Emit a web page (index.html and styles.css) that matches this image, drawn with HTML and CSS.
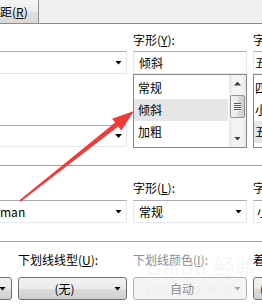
FILE: index.html
```html
<!DOCTYPE html>
<html lang="zh-CN">
<head>
    <meta charset="UTF-8">
    <meta name="viewport" content="width=device-width, initial-scale=1.0">
    <title>字体</title>
    <link rel="stylesheet" href="styles.css">
</head>
<body>
    <div class="dialog">
        <div class="tabs">
            <div class="tab">字符间距(<u>R</u>)</div>
        </div>

        <div class="pane">
            <!-- 中文 / 西文字体 -->
            <section class="group group-top">
                <div class="col">
                    <label class="label">中文字体(<u>T</u>):</label>
                    <div class="combo"><span class="combo-text">+中文正文</span><i class="caret"></i></div>
                    <label class="label label-second">西文字体(<u>F</u>):</label>
                    <div class="combo combo-short"><span class="combo-text">+西文正文</span><i class="caret"></i></div>
                </div>
                <div class="col">
                    <label class="label">字形(<u>Y</u>):</label>
                    <div class="edit">倾斜</div>
                    <div class="listbox">
                        <ul class="list-items">
                            <li>常规</li>
                            <li class="selected">倾斜</li>
                            <li>加粗</li>
                        </ul>
                        <div class="scrollbar">
                            <span class="sb-btn sb-up"></span>
                            <span class="sb-thumb"><i class="grip"></i></span>
                            <span class="sb-btn sb-down"></span>
                        </div>
                    </div>
                </div>
                <div class="col">
                    <label class="label">字号(<u>S</u>):</label>
                    <div class="edit edit-narrow">五号</div>
                    <div class="listbox">
                        <ul class="list-items list-narrow">
                            <li>四号</li>
                            <li>小四</li>
                            <li class="selected">五号</li>
                        </ul>
                    </div>
                </div>
            </section>

            <!-- 复杂文种 -->
            <section class="group group-mid">
                <div class="col">
                    <label class="label">字体(<u>E</u>):</label>
                    <div class="combo"><span class="combo-text">Times New Roman</span><i class="caret"></i></div>
                </div>
                <div class="col">
                    <label class="label">字形(<u>L</u>):</label>
                    <div class="combo"><span class="combo-text combo-text-pad">常规</span><i class="caret"></i></div>
                </div>
                <div class="col">
                    <label class="label">字号(<u>Z</u>):</label>
                    <div class="combo"><span class="combo-text">小四</span><i class="caret"></i></div>
                </div>
            </section>

            <!-- 所有文字 -->
            <section class="group group-bottom">
                <div class="col">
                    <label class="label">字体颜色(<u>C</u>):</label>
                    <div class="button"><span class="button-text">自动</span><i class="caret"></i></div>
                </div>
                <div class="col">
                    <label class="label">下划线线型(<u>U</u>):</label>
                    <div class="button"><span class="button-text">(无)</span><i class="caret"></i></div>
                </div>
                <div class="col">
                    <label class="label is-disabled">下划线颜色(<u>I</u>):</label>
                    <div class="button is-disabled"><span class="button-text">自动</span><i class="caret"></i></div>
                </div>
                <div class="col">
                    <label class="label">着重号(·):</label>
                    <div class="button"><span class="button-text">(无)</span><i class="caret"></i></div>
                </div>
            </section>
        </div>

        <div class="watermark">
            <span class="wm-logo">Bai<b>du</b> 经验</span>
            <span class="wm-url">jingyan.baidu.com</span>
        </div>

        <svg class="arrow" width="262" height="308" viewBox="0 0 262 308">
            <polygon points="19.4,200.2 115.2,122.6 112,118.7 134,111 121.4,130.5 118.2,126.6 20.6,201.8" fill="#f03b3b"/>
        </svg>
    </div>
</body>
</html>
```

FILE: styles.css
```css
:root {
    --line: #a0a0a0;
    --edit-top: #abadb3;
    --edit-side: #e3e9ef;
    --list-border: #828790;
    --selected: #e6e6e6;
    --disabled: #8f8f8f;
}

body {
    margin: 0;
    font-family: "Noto Sans CJK SC", "Microsoft YaHei", sans-serif;
    font-size: 12px;
    color: #000;
    background: #fff;
}

u {
    text-decoration: underline;
    text-underline-offset: 1px;
}

.dialog {
    position: relative;
    width: 262px;
    height: 308px;
    overflow: hidden;
}

.tabs {
    display: flex;
    height: 23px;
    background: #f0f0f0;
    border-bottom: 1px solid #898c95;
}

.tab {
    margin-left: -42px;
    padding: 0 10px 0 6px;
    line-height: 23px;
    white-space: nowrap;
    border-right: 1px solid #8e8f8f;
    background: linear-gradient(#f4f4f4, #ececec 50%, #e0e0e0 51%, #d8d8d8);
}

.group {
    display: grid;
    grid-template-columns: 210px 114px 80px;
    column-gap: 6px;
    margin-left: -83px;
    box-sizing: border-box;
    align-items: start;
}

.group-top {
    height: 141px;
    padding-top: 8px;
}

.group-mid {
    height: 76px;
    padding-top: 14px;
    border-top: 1px solid var(--line);
}

.group-bottom {
    grid-template-columns: 105px 109px 114px 50px;
    margin-left: -93px;
    padding-top: 10px;
    border-top: 1px solid var(--line);
}

.col {
    display: flex;
    flex-direction: column;
    min-width: 0;
}

.label {
    display: block;
    height: 16px;
    line-height: 16px;
    margin-bottom: 3px;
    white-space: nowrap;
}

.label-second {
    margin-top: 31px;
    margin-bottom: 4px;
}

.group-mid .label {
    margin-bottom: 4px;
}

.group-bottom .label {
    margin-bottom: 9px;
}

.label.is-disabled {
    color: var(--disabled);
}

.combo,
.edit {
    display: flex;
    align-items: center;
    height: 23px;
    box-sizing: border-box;
    border: 1px solid var(--edit-side);
    border-top-color: var(--edit-top);
    background: #fff;
    white-space: nowrap;
}

.combo {
    padding: 0 4px 0 3px;
}

.combo-short {
    height: 22px;
}

.combo-text {
    flex: 1;
    overflow: hidden;
}

.combo-text-pad {
    padding-left: 2px;
}

.edit {
    padding-left: 5px;
}

.edit-narrow {
    padding-left: 1px;
}

.caret {
    flex: none;
    width: 7px;
    height: 4px;
    background: #000;
    clip-path: polygon(0 0, 100% 0, 50% 100%);
}

.listbox {
    display: flex;
    height: 74px;
    box-sizing: border-box;
    border: 1px solid var(--list-border);
    background: #fff;
}

.list-items {
    flex: 1;
    margin: 0;
    padding: 2px 1px 0 0;
    list-style: none;
    overflow: hidden;
}

.list-items li {
    height: 22px;
    line-height: 22px;
    padding-left: 4px;
    white-space: nowrap;
}

.list-narrow li {
    padding-left: 1px;
}

.list-items li.selected {
    background: var(--selected);
}

.scrollbar {
    display: flex;
    flex-direction: column;
    align-items: center;
    width: 17px;
    background: linear-gradient(90deg, #e6e6e6, #f4f4f4 25%, #f4f4f4 75%, #e6e6e6);
}

.sb-btn {
    display: flex;
    align-items: center;
    justify-content: center;
    width: 17px;
    height: 17px;
}

.sb-btn::before {
    content: "";
    width: 7px;
    height: 4px;
    background: #404040;
}

.sb-up::before {
    clip-path: polygon(50% 0, 100% 100%, 0 100%);
}

.sb-down {
    margin-top: auto;
}

.sb-down::before {
    clip-path: polygon(0 0, 100% 0, 50% 100%);
}

.sb-thumb {
    display: flex;
    align-items: center;
    justify-content: center;
    width: 15px;
    height: 23px;
    margin-top: 3px;
    box-sizing: border-box;
    border: 1px solid #959595;
    border-radius: 2px;
    background: linear-gradient(90deg, #f3f3f3, #e8e8e8 50%, #d9d9d9 51%, #cfcfcf);
}

.grip {
    width: 7px;
    height: 8px;
    background: repeating-linear-gradient(#5a5a5a 0 1px, #f8f8f8 1px 2px);
}

.button {
    display: flex;
    align-items: center;
    height: 23px;
    box-sizing: border-box;
    padding: 0 5px 0 4px;
    border: 1px solid #707070;
    border-radius: 3px;
    background: linear-gradient(#f2f2f2, #ebebeb 50%, #dddddd 51%, #cfcfcf);
    white-space: nowrap;
}

.button-text {
    flex: 1;
    padding-right: 8px;
    text-align: center;
    overflow: hidden;
}

.button.is-disabled {
    border-color: #adb2b5;
    background: #f4f4f4;
    color: var(--disabled);
}

.button.is-disabled .caret {
    background: #a6a6a6;
}

.watermark {
    position: absolute;
    left: 146px;
    top: 254px;
    display: flex;
    flex-direction: column;
    color: rgba(0, 0, 0, 0.045);
    pointer-events: none;
}

.wm-logo {
    font-family: "Liberation Sans", sans-serif;
    font-size: 22px;
    font-weight: bold;
    line-height: 28px;
}

.wm-url {
    font-family: "Liberation Sans", sans-serif;
    font-size: 12px;
    line-height: 14px;
}

.arrow {
    position: absolute;
    left: 0;
    top: 0;
    pointer-events: none;
}
```
